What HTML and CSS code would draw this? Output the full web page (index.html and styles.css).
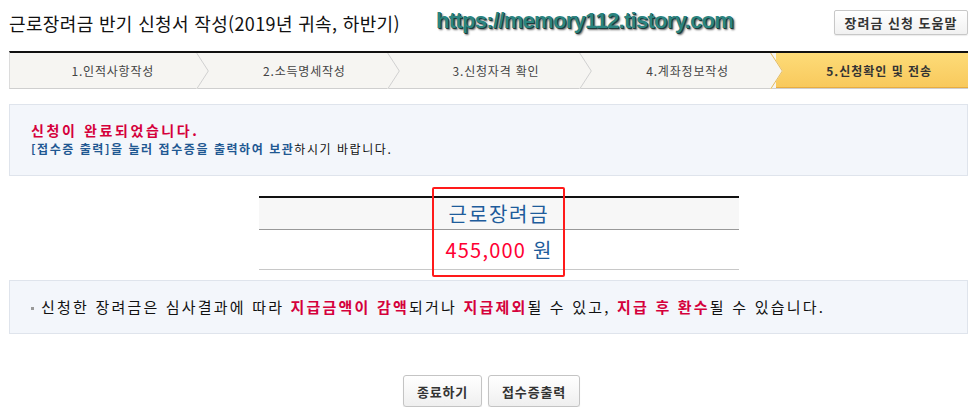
FILE: index.html
```html
<!DOCTYPE html>
<html lang="ko">
<head>
    <meta charset="UTF-8">
    <meta name="viewport" content="width=device-width, initial-scale=1.0">
    <link rel="stylesheet" href="styles.css">
    <title>근로장려금 반기 신청서 작성</title>
</head>
<body>
    <div class="wrap">
        <div class="header">
            <h1 class="title">근로장려금 반기 신청서 작성(2019년 귀속, 하반기)</h1>
            <span class="watermark">https://memory112.tistory.com</span>
            <button type="button" class="help-btn">장려금 신청 도움말</button>
        </div>

        <ol class="steps">
            <li class="step">1.인적사항작성<svg class="sep" viewBox="0 0 13 37" width="13" height="37"><polygon points="0,0 1,0 13,18.5 1,37 0,37" fill="#f6f5f2"/><polyline points="0.5,0 12.5,18.5 0.5,37" fill="none" stroke="#cfcfcf"/></svg></li>
            <li class="step">2.소득명세작성<svg class="sep" viewBox="0 0 13 37" width="13" height="37"><polygon points="0,0 1,0 13,18.5 1,37 0,37" fill="#f6f5f2"/><polyline points="0.5,0 12.5,18.5 0.5,37" fill="none" stroke="#cfcfcf"/></svg></li>
            <li class="step">3.신청자격 확인<svg class="sep" viewBox="0 0 13 37" width="13" height="37"><polygon points="0,0 1,0 13,18.5 1,37 0,37" fill="#f6f5f2"/><polyline points="0.5,0 12.5,18.5 0.5,37" fill="none" stroke="#cfcfcf"/></svg></li>
            <li class="step">4.계좌정보작성<svg class="sep" viewBox="0 0 13 37" width="13" height="37"><polygon points="0,0 1,0 13,18.5 1,37 0,37" fill="#f6f5f2"/><polyline points="0.5,0 12.5,18.5 0.5,37" fill="none" stroke="#e3b95a"/></svg></li>
            <li class="step active">5.신청확인 및 전송</li>
        </ol>

        <div class="notice done">
            <p class="done-title">신청이 완료되었습니다.</p>
            <p class="done-desc"><strong>[접수증 출력]을 눌러 접수증을 출력하여 보관</strong>하시기 바랍니다.</p>
        </div>

        <div class="amount-area">
            <table class="amount">
                <thead>
                    <tr><th>근로장려금</th></tr>
                </thead>
                <tbody>
                    <tr><td><span class="won">455,000</span> 원</td></tr>
                </tbody>
            </table>
            <div class="highlight"></div>
        </div>

        <div class="notice info">
            <p><span class="bullet"></span>신청한 장려금은 심사결과에 따라 <em>지급금액이 감액</em>되거나 <em>지급제외</em>될 수 있고, <em>지급 후 환수</em>될 수 있습니다.</p>
        </div>

        <div class="actions">
            <button type="button" class="btn">종료하기</button>
            <button type="button" class="btn">접수증출력</button>
        </div>
    </div>
</body>
</html>
```

FILE: styles.css
```css
body {
    margin: 0;
    padding: 0;
    background: #ffffff;
    font-family: "Noto Sans CJK KR", "Noto Sans", sans-serif;
    color: #222;
}

.wrap {
    width: 959px;
    margin-left: 9px;
}

/* header */
.header {
    display: flex;
    align-items: center;
    height: 51px;
}

.title {
    margin: 0 0 6px 0;
    font-size: 18px;
    font-weight: normal;
    color: #111;
    letter-spacing: 0.35px;
    width: 427px;
    white-space: nowrap;
}

.watermark {
    margin-bottom: 10px;
    font-family: "Liberation Sans", Arial, sans-serif;
    font-size: 22px;
    font-weight: bold;
    letter-spacing: -0.7px;
    color: #2b8480;
    text-shadow: 1px 1px 0 #1d3b3b, 2px 2px 2px #666;
}

.help-btn {
    margin-left: auto;
    margin-bottom: 6px;
    width: 134px;
    height: 25px;
    padding: 0;
    border: 1px solid #c8c8c8;
    border-radius: 2px;
    background: linear-gradient(#ffffff, #f1f1f1);
    box-shadow: 0 1px 1px rgba(0, 0, 0, 0.08);
    font-family: inherit;
    font-size: 13px;
    font-weight: bold;
    letter-spacing: 1px;
    color: #333;
}

/* steps */
.steps {
    display: flex;
    margin: 0;
    padding: 0;
    list-style: none;
    border-top: 2px solid #111;
    border-bottom: 1px solid #cfcfcf;
    border-left: 1px solid #dcdcdc;
    background: #f6f5f2;
}

.step {
    position: relative;
    flex: 1;
    height: 35px;
    line-height: 35px;
    padding-left: 14px;
    text-align: center;
    font-size: 12px;
    letter-spacing: 0.8px;
    color: #444;
}

.step .sep {
    position: absolute;
    top: 0;
    right: -7px;
    z-index: 1;
    height: 36px;
}

.step.active {
    background: linear-gradient(#fddb78, #f8c95c);
    box-shadow: inset 0 -1px 0 #e8ad40;
    font-weight: bold;
    letter-spacing: 1px;
    color: #333;
}

/* notice boxes */
.notice {
    background: #f3f6fb;
    border: 1px solid #dfe4ec;
}

.notice p {
    margin: 0;
}

.done {
    margin-top: 15px;
    padding: 16px 21px 18px;
}

.done-title {
    font-size: 14px;
    font-weight: bold;
    color: #d5003b;
    line-height: 19px;
    letter-spacing: 2.6px;
}

.done-desc {
    font-size: 12px;
    color: #111;
    line-height: 17px;
    letter-spacing: 1.55px;
}

.done-desc strong {
    color: #1f5892;
}

/* amount table */
.amount-area {
    position: relative;
    width: 480px;
    margin: 20px 0 0 250px;
}

.amount {
    width: 100%;
    border-collapse: collapse;
    border-top: 2px solid #111;
}

.amount th {
    height: 31px;
    background: #f7f7f7;
    border-bottom: 1px solid #999;
    font-size: 20px;
    font-weight: normal;
    letter-spacing: 1.8px;
    color: #1e5c9b;
    padding: 0;
}

.amount td {
    height: 39px;
    border-bottom: 1px solid #c8c8c8;
    text-align: center;
    font-size: 20px;
    letter-spacing: 1.2px;
    color: #1e5c9b;
    padding: 0;
}

.amount .won {
    color: #ff0033;
}

.highlight {
    position: absolute;
    left: 173px;
    top: -9px;
    width: 129px;
    height: 86px;
    border: 2px solid #ff1a1a;
    border-radius: 2px;
}

/* info */
.info {
    margin-top: 10px;
    padding: 15px 21px 16px;
    font-size: 15px;
    line-height: 21px;
    letter-spacing: 2.2px;
    color: #111;
}

.info .bullet {
    display: inline-block;
    width: 3px;
    height: 3px;
    background: #999;
    vertical-align: middle;
    margin-right: 7px;
}

.info em {
    font-style: normal;
    font-weight: bold;
    color: #d5003b;
}

/* buttons */
.actions {
    display: flex;
    justify-content: center;
    gap: 6px;
    margin-top: 41px;
    padding-left: 6px;
}

.btn {
    height: 32px;
    padding: 0 13px;
    border: 1px solid #c4c4c4;
    border-radius: 3px;
    background: linear-gradient(#ffffff, #efefef);
    box-shadow: 0 1px 1px rgba(0, 0, 0, 0.1);
    font-family: inherit;
    font-size: 13px;
    font-weight: bold;
    letter-spacing: 0.8px;
    color: #333;
}
```
